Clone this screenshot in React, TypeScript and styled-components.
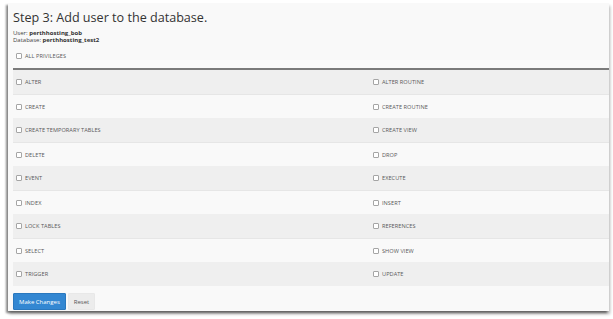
import React from 'react';
import styled, { createGlobalStyle } from 'styled-components';

const GlobalStyle = createGlobalStyle`
  html, body {
    margin: 0;
    padding: 0;
    background: #ffffff;
    font-family: 'Open Sans', 'Liberation Sans', sans-serif;
  }
`;

const Page = styled.div`
  width: 613px;
  height: 319px;
  padding: 3px 0 0 8px;
  box-sizing: border-box;
`;

const Panel = styled.div`
  width: 601px;
  height: 308px;
  background: #f9f9f9;
  box-shadow: -2px 2px 2px rgba(0, 0, 0, 0.45), 1px 3px 3px rgba(0, 0, 0, 0.3);
  padding: 6px 0 0 5px;
  box-sizing: border-box;
  display: flex;
  flex-direction: column;
`;

const Title = styled.h2`
  margin: 0;
  font-size: 12.6px;
  font-weight: 400;
  color: #333;
  line-height: 18px;
`;

const Meta = styled.div`
  font-size: 6px;
  line-height: 6.5px;
  color: #444;
  margin-top: 3px;

  b {
    font-weight: 700;
    color: #333;
  }
`;

const AllRow = styled.div`
  display: flex;
  align-items: center;
  height: 24px;
  margin-top: 1px;
`;

const Table = styled.div`
  border-top: 2px solid #7a7a7a;
  display: flex;
  flex-direction: column;
`;

const Row = styled.div<{ $odd: boolean }>`
  display: grid;
  grid-template-columns: 357px 1fr;
  height: 24px;
  align-items: center;
  background: ${({ $odd }) => ($odd ? '#efefef' : '#f9f9f9')};
  border-top: ${({ $odd }) => ($odd ? 'none' : '1px solid #e6e6e6')};
  box-sizing: border-box;
`;

const Cell = styled.label`
  display: flex;
  align-items: center;
  padding-left: 3px;
  font-size: 5.6px;
  color: #5a5a5a;
  text-transform: uppercase;
  letter-spacing: 0.05px;
`;

const Box = styled.span`
  width: 4px;
  height: 4px;
  border: 1px solid #a5a5a5;
  border-radius: 1px;
  background: #fff;
  margin-right: 3px;
  flex-shrink: 0;
`;

const Actions = styled.div`
  display: flex;
  gap: 2px;
  margin-top: 7px;
`;

const Button = styled.button<{ $primary?: boolean }>`
  font-family: inherit;
  font-size: 6px;
  height: 17px;
  padding: 0 5px;
  border-radius: 1px;
  cursor: pointer;
  border: 1px solid ${({ $primary }) => ($primary ? '#2a78be' : '#e8e8e8')};
  background: ${({ $primary }) => ($primary ? '#3387d2' : '#ececec')};
  color: ${({ $primary }) => ($primary ? '#ffffff' : '#555')};
`;

const privileges: [string, string][] = [
  ['ALTER', 'ALTER ROUTINE'],
  ['CREATE', 'CREATE ROUTINE'],
  ['CREATE TEMPORARY TABLES', 'CREATE VIEW'],
  ['DELETE', 'DROP'],
  ['EVENT', 'EXECUTE'],
  ['INDEX', 'INSERT'],
  ['LOCK TABLES', 'REFERENCES'],
  ['SELECT', 'SHOW VIEW'],
  ['TRIGGER', 'UPDATE'],
];

const Privilege: React.FC<{ name: string }> = ({ name }) => (
  <Cell>
    <Box />
    {name}
  </Cell>
);

const App: React.FC = () => (
  <>
    <GlobalStyle />
    <Page>
      <Panel>
        <Title>Step 3: Add user to the database.</Title>
        <Meta>
          User: <b>perthhosting_bob</b>
          <br />
          Database: <b>perthhosting_test2</b>
        </Meta>
        <AllRow>
          <Privilege name="All Privileges" />
        </AllRow>
        <Table>
          {privileges.map(([left, right], i) => (
            <Row key={left} $odd={i % 2 === 0}>
              <Privilege name={left} />
              <Privilege name={right} />
            </Row>
          ))}
        </Table>
        <Actions>
          <Button $primary>Make Changes</Button>
          <Button>Reset</Button>
        </Actions>
      </Panel>
    </Page>
  </>
);

export default App;
